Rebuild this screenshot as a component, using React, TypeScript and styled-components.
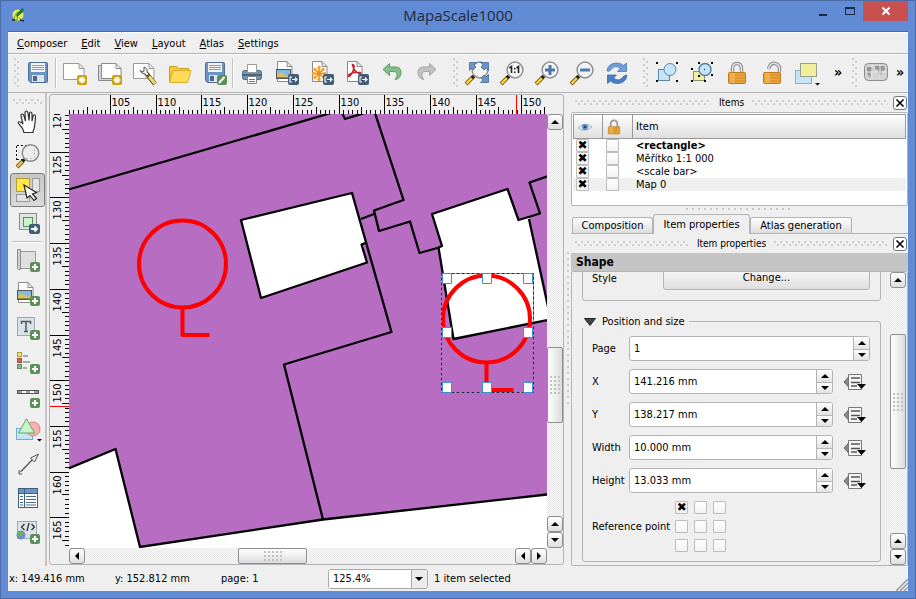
import React from 'react';
import styled, { createGlobalStyle, css } from 'styled-components';

const color = {
  frame: '#628bd5',
  frameEdge: '#4a6ba8',
  panel: '#efefef',
  line: '#b4b4b4',
  parcel: '#b66dc2',
  red: '#ff0000',
};

const GlobalStyle = createGlobalStyle`
  *, *::before, *::after { box-sizing: border-box; }
  body {
    margin: 0;
    background: ${color.frame};
    color: #000;
    font: 11px/13px 'DejaVu Sans Condensed', 'DejaVu Sans', sans-serif;
  }
  button, input, select { font: inherit; color: inherit; margin: 0; padding: 0; }
  svg { display: block; flex: none; overflow: visible; }
`;

const raised = css`
  border: 1px solid #8e8e8e;
  border-radius: 3px;
  background: linear-gradient(#ffffff, #dedede);
`;

const dots = css`
  background:
    conic-gradient(at 2px 2px, transparent 75%, #cdcdcd 0) 0 0 / 6px 6px,
    conic-gradient(at 2px 2px, transparent 75%, #cdcdcd 0) 3px 3px / 6px 6px;
`;

/* ---------- window ---------- */

const Window = styled.div`
  display: flex;
  flex-direction: column;
  min-height: 100vh;
  padding: 0 7px 7px;
  border: 1px solid ${color.frameEdge};
  background: ${color.frame};
`;

const TitleBar = styled.header`
  display: grid;
  grid-template-columns: 1fr auto 1fr;
  height: 30px;
  align-items: center;
`;

const Title = styled.h1`
  align-self: start;
  margin: 0;
  font: 400 15px/28px 'Open Sans', 'Noto Sans', sans-serif;
  color: #1e2a42;
`;

const WindowButtons = styled.div`
  display: flex;
  align-self: start;
  justify-content: flex-end;
`;

const WindowButton = styled.button<{ $close?: boolean }>`
  display: flex;
  align-items: center;
  justify-content: center;
  width: ${p => (p.$close ? 45 : 27)}px;
  height: 20px;
  border: 0;
  background: ${p => (p.$close ? '#c75050' : 'transparent')};
`;

const Client = styled.div`
  display: flex;
  flex-direction: column;
  flex: 1;
  border-top: 1px solid ${color.frameEdge};
  background: ${color.panel};
`;

const MenuBar = styled.nav`
  display: flex;
  height: 22px;
  padding: 0 2px;
  align-items: center;
  border-top: 1px solid #fff;
  border-bottom: 1px solid ${color.line};
`;

const MenuItem = styled.button`
  padding: 2px 7px;
  border: 0;
  background: none;
`;

/* ---------- tool bars ---------- */

const ToolBar = styled.div`
  display: flex;
  height: 39px;
  padding-bottom: 2px;
  align-items: center;
  border-top: 1px solid #fff;
  border-bottom: 1px solid ${color.line};
`;

const Grip = styled.span<{ $vertical?: boolean; $gap?: number }>`
  flex: none;
  ${dots}
  ${p => p.$vertical
    ? css`width: 6px; height: 30px; margin-left: ${p.$gap ?? 0}px;`
    : css`width: 30px; height: 6px; margin-top: 6px;`}
`;

const ToolButton = styled.button<{ $active?: boolean }>`
  position: relative;
  display: flex;
  flex: none;
  align-items: center;
  justify-content: center;
  width: 35px;
  height: 34px;
  border: 1px solid ${p => (p.$active ? '#7c7c7c' : 'transparent')};
  border-radius: 3px;
  background: ${p => (p.$active ? 'linear-gradient(#c6c6c6, #dadada)' : 'none')};
`;

const MoreButton = styled.button<{ $width: number }>`
  width: ${p => p.$width}px;
  height: 34px;
  border: 0;
  background: none;
  font-weight: 700;
  font-size: 14px;
  text-align: center;
`;

const ToolSeparator = styled.span<{ $horizontal?: boolean }>`
  flex: none;
  ${p => p.$horizontal
    ? css`width: 31px; height: 2px; border-top: 1px solid #c2c2c2; border-bottom: 1px solid #fff;`
    : css`width: 2px; height: 30px; border-left: 1px solid #c2c2c2; border-right: 1px solid #fff;`}
`;

const Body = styled.div`
  display: grid;
  grid-template-columns: 39px minmax(0, 517fr) 7px minmax(0, 337fr);
  flex: 1;
`;

const SideBar = styled.div`
  display: flex;
  flex-direction: column;
  align-items: center;
  padding-left: 2px;
  border-right: 2px solid #c4c4c4;
`;

/* ---------- canvas ---------- */

const CanvasFrame = styled.div`
  display: grid;
  grid-template-columns: 19px minmax(0, 1fr) 16px;
  grid-template-rows: 19px minmax(0, 1fr) 16px;
  margin: 1px 0 1px 2px;
  border: 1px solid ${color.line};
  border-radius: 3px;
`;

const Fill = styled.svg<{ $area: string }>`
  grid-area: ${p => p.$area};
  width: 100%;
  height: 100%;
  overflow: hidden;
`;

const ScrollBar = styled.div<{ $horizontal?: boolean; $area?: string }>`
  display: flex;
  flex-direction: ${p => (p.$horizontal ? 'row' : 'column')};
  ${p => p.$area && css`grid-area: ${p.$area};`}
  ${p => (p.$horizontal ? css`height: 16px;` : css`width: 16px;`)}
  background: repeating-conic-gradient(#e6e6e6 0 25%, #fafafa 0 50%) 0 0 / 2px 2px;
`;

const ScrollArrow = styled.button`
  display: flex;
  flex: none;
  align-items: center;
  justify-content: center;
  width: 16px;
  height: 16px;
  ${raised}
`;

const Track = styled.span<{ $size: number }>`
  flex: ${p => p.$size} 1 0;
`;

const Thumb = styled.button<{ $size: number; $horizontal?: boolean }>`
  display: flex;
  flex: ${p => p.$size} 1 0;
  align-items: center;
  justify-content: center;
  border: 1px solid #8e8e8e;
  border-radius: 2px;
  background: linear-gradient(${p => (p.$horizontal ? '180deg' : '90deg')}, #ffffff, #dcdcdc);

  &::after {
    content: '';
    width: ${p => (p.$horizontal ? 18 : 10)}px;
    height: ${p => (p.$horizontal ? 10 : 18)}px;
    background: conic-gradient(at 2px 2px, transparent 75%, #c2c2c2 0) 0 0 / 4px 4px;
  }
`;

const Splitter = styled.div<{ $row?: boolean }>`
  display: flex;
  flex: none;
  align-items: center;
  justify-content: center;
  ${p => p.$row && css`
    height: 8px;
    padding-bottom: 2px;
  `}

  &::after {
    content: '';
    width: ${p => (p.$row ? 108 : 2)}px;
    height: ${p => (p.$row ? 2 : 156)}px;
    background: conic-gradient(at 2px 2px, transparent 75%, #c9c9c9 0) 0 0 / 6px 6px;
  }
`;

/* ---------- docks ---------- */

const DockColumn = styled.aside`
  display: flex;
  flex-direction: column;
`;

const DockTitle = styled.div`
  display: flex;
  align-items: center;
  gap: 8px;
  height: 19px;
  padding: 0 1px 0 4px;
  font-size: 10px;
`;

const DockGrip = styled.span`
  flex: 1;
  height: 5px;
  ${dots}
`;

const CloseButton = styled.button`
  display: flex;
  align-items: center;
  justify-content: center;
  width: 14px;
  height: 14px;
  margin-left: -3px;
  border: 1px solid #777;
  border-radius: 3px;
  background: #fff;
`;

const TreeFrame = styled.div`
  height: 94px;
  border: 1px solid ${color.line};
  border-radius: 2px;
  background: #fff;
  padding: 1px;
`;

const Tree = styled.table`
  width: 100%;
  border-collapse: separate;
  border-spacing: 0;
  table-layout: fixed;
`;

const HeaderCell = styled.th<{ $width?: number }>`
  ${p => p.$width && css`width: ${p.$width}px;`}
  height: 25px;
  padding: 0 3px;
  border: 1px solid #9a9a9a;
  border-left-width: 0;
  background: linear-gradient(#fefefe, #dfdfdf);
  font-weight: 400;
  text-align: left;

  &:first-child { border-left-width: 1px; }
`;

const TreeRow = styled.tr<{ $shaded?: boolean; $bold?: boolean }>`
  background: ${p => (p.$shaded ? '#efefef' : '#fff')};
  font-weight: ${p => (p.$bold ? 700 : 400)};
`;

const TreeCell = styled.td`
  height: 13px;
  padding: 0 3px;
  line-height: 13px;
`;

const CheckBox = styled.input.attrs({ type: 'checkbox' })`
  display: flex;
  align-items: center;
  justify-content: center;
  appearance: none;
  width: 13px;
  height: 13px;
  border: 1px solid #bdbdbd;
  border-radius: 1px;
  background: linear-gradient(#ffffff, #f2f2f2);

  &:checked::after {
    content: '✖';
    font: 700 12px/11px 'DejaVu Sans', sans-serif;
  }
`;

const TabBar = styled.div`
  display: flex;
  align-items: flex-end;
  height: 20px;
  padding-left: 1px;
  border-bottom: 1px solid ${color.line};
`;

const Tab = styled.button<{ $active?: boolean; $grow: number }>`
  flex: 0 1 ${p => p.$grow}px;
  height: ${p => (p.$active ? 20 : 16)}px;
  margin-bottom: ${p => (p.$active ? -1 : 0)}px;
  border: 1px solid ${color.line};
  border-bottom: 0;
  border-radius: 3px 3px 0 0;
  background: ${p => (p.$active ? color.panel : 'linear-gradient(#ffffff, #dddddd)')};
  white-space: nowrap;
`;

const Heading = styled.h2`
  margin: 0;
  padding: 2px 5px 2px;
  background: #c5c5c5;
  font-size: 12px;
  line-height: 14px;
`;

const ScrollArea = styled.div`
  display: flex;
  flex: 1 1 0;
  overflow: hidden;
  padding-right: 1px;
  border: 1px solid ${color.line};
  border-radius: 2px;
`;

const Form = styled.div`
  flex: 1;
  padding: 0 9px 0 10px;
  margin-top: -26px;
`;

const StyleGroup = styled.div`
  display: flex;
  align-items: flex-end;
  height: 55px;
  margin-bottom: 14px;
  padding: 0 10px 10px 9px;
  border: 1px solid ${color.line};
  border-radius: 3px;
`;

const StyleLabel = styled.span`
  flex: 0 0 71px;
  line-height: 22px;
`;

const ChangeButton = styled.button`
  flex: 1;
  height: 26px;
  ${raised}
  border-color: ${color.line};
`;

const Group = styled.fieldset`
  min-width: 0;
  margin: 0;
  padding: 8px 10px 9px 9px;
  border: 1px solid ${color.line};
  border-radius: 3px;
`;

const Legend = styled.legend`
  display: flex;
  align-items: center;
  gap: 6px;
  margin-left: -10px;
  padding: 0 4px 0 2px;
  background: ${color.panel};
`;

const Toggle = styled.button`
  display: flex;
  border: 0;
  background: none;
`;

const Field = styled.div`
  display: grid;
  grid-template-columns: 37px minmax(0, 1fr) auto;
  align-items: center;
  height: 25px;
  margin-bottom: 8px;
`;

const SpinBox = styled.span`
  display: flex;
  height: 25px;
  border: 1px solid ${color.line};
  border-radius: 3px;
  background: #fff;
  overflow: hidden;
`;

const SpinInput = styled.input`
  flex: 1;
  min-width: 0;
  padding: 0 4px;
  border: 0;
  background: none;
`;

const SpinButtons = styled.span`
  display: grid;
  grid-template-rows: 1fr 1fr;
  width: 16px;
  border-left: 1px solid ${color.line};
`;

const SpinButton = styled.button`
  display: flex;
  align-items: center;
  justify-content: center;
  border: 0;
  background: linear-gradient(#ffffff, #e2e2e2);

  & + & { border-top: 1px solid ${color.line}; }
`;

const OverrideButton = styled.button`
  display: flex;
  justify-content: flex-end;
  width: 37px;
  padding-right: 3px;
  border: 0;
  background: none;
`;

const ReferenceField = styled.div`
  display: flex;
  align-items: center;
  gap: 5px;
`;

const ReferenceGrid = styled.div`
  display: grid;
  grid-template-columns: repeat(3, 13px);
  gap: 6px;
`;

/* ---------- status bar ---------- */

const StatusBar = styled.footer`
  display: flex;
  align-items: center;
  height: 25px;
  padding-left: 1px;
`;

const StatusText = styled.span<{ $width?: number }>`
  ${p => (p.$width ? css`flex: 0 0 ${p.$width}px;` : css`flex: 1; padding-left: 6px;`)}
`;

const ZoomBox = styled.label`
  position: relative;
  display: flex;
  width: 100px;
  height: 20px;
  border: 1px solid #a9a9a9;
  border-radius: 3px;
  overflow: hidden;
`;

const ZoomSelect = styled.select`
  flex: 1;
  appearance: none;
  padding: 0 4px;
  border: 0;
  background: linear-gradient(90deg, #fff calc(100% - 16px), #aaa 0, #aaa calc(100% - 15px), #ececec 0);
`;

const ZoomArrow = styled.span`
  position: absolute;
  right: 4px;
  top: 5px;
  pointer-events: none;
`;

const SizeGrip = styled.svg`
  align-self: flex-end;
  overflow: hidden;
`;

/* ---------- icons ---------- */

type Kids = { children: React.ReactNode };

const Icon = ({ children }: Kids) => (
  <svg width="24" height="24" viewBox="0 0 24 24" fill="none">{children}</svg>
);

const Arrow = ({ dir }: { dir: 'up' | 'down' | 'left' | 'right' }) => {
  const d = { up: 'M0 6 4 2 8 6Z', down: 'M0 2 4 6 8 2Z', left: 'M6 0 2 4 6 8Z', right: 'M2 0 6 4 2 8Z' }[dir];
  return <svg width="8" height="8" viewBox="0 0 8 8"><path d={d} fill="#000" /></svg>;
};

const Cross = ({ stroke, weight = 2 }: { stroke: string; weight?: number }) => (
  <svg width="8" height="8" viewBox="0 0 8 8"><path d="M.5.5 7.500 7.500M7.500.5.5 7.500" stroke={stroke} strokeWidth={weight} /></svg>
);

const Plus = ({ x = 14, y = 14 }: { x?: number; y?: number }) => (
  <g>
    <rect x={x} y={y} width="10" height="10" rx="2" fill="#5a9158" />
    <path d={`M${x + 5} ${y + 2}v6M${x + 2} ${y + 5}h6`} stroke="#fff" strokeWidth="2" />
  </g>
);

const Star = () => (
  <g>
    <rect x="14" y="14" width="10" height="10" rx="2" fill="#c9a107" />
    <path d="M19 15.500v7M15.500 19h7M16.500 16.500l5 5M21.500 16.500l-5 5" stroke="#fff" strokeWidth="1.300" />
  </g>
);

const Export = () => (
  <g>
    <rect x="13" y="13" width="11" height="11" rx="2" fill="#415c74" />
    <path d="M17 16h-2v5h2M17 18.500h5M20 16.500l2 2-2 2" stroke="#fff" strokeWidth="1.100" />
  </g>
);

const Page = () => <path d="M2.500 .5H12l5 5V20.500H2.500ZM12 .5v5h5" fill="#fff" stroke="#8a8a8a" />;

const Picture = () => (
  <g>
    <rect x="1.500" y="8.500" width="14" height="9" fill="#7cbbea" stroke="#555" />
    <path d="M2 14q4-5 7-1t6-1v5H2Z" fill="#d8c063" />
    <path d="M2 16h13v1H2Z" fill="#8c8a3d" />
  </g>
);

const Disk = () => (
  <g>
    <path d="M3.500 1.500h17q1 0 1 1v18q0 1-1 1h-16l-2-2v-17q0-1 1-1Z" fill="#6b94c4" stroke="#4d6f97" />
    <rect x="5" y="2" width="14" height="9" fill="#f4f4f4" />
    <path d="M6 4.500h12M6 6.500h12M6 8.500h12" stroke="#9a9a9a" />
    <rect x="6" y="14" width="12" height="7" fill="#e3e3e3" />
    <rect x="7" y="15" width="4" height="5" fill="#44688f" />
  </g>
);

const Lens = () => (
  <g>
    <path d="M1 23 8 16" stroke="#7a5a10" strokeWidth="4" />
    <path d="M1.500 22.500 7 17" stroke="#ffd23c" strokeWidth="2.400" />
    <path d="M7 17l2-2" stroke="#222" strokeWidth="3.500" />
    <circle cx="15" cy="9" r="7.900" fill="#f5f5f5" stroke="#909090" strokeWidth="1.500" />
  </g>
);

const Corners = () => (
  <path d="M1 1h2v2H1ZM21 1h2v2h-2ZM1 19h2v2H1ZM21 19h2v2h-2Z" fill="#000" />
);

const LockBody = () => (
  <g>
    <rect x="3.500" y="11.500" width="17" height="11" rx="1" fill="#e8a33b" stroke="#c17d1c" />
    <path d="M4 14h16M4 17h16M4 20h16" stroke="#d58f29" />
    <rect x="5" y="12" width="5" height="10" fill="#f3bd62" opacity=".6" />
  </g>
);

const icons = {
  save: <Icon><Disk /></Icon>,
  newPage: <Icon><path d="M.5 2.500H16l5 5v11H.5ZM16 2.500v5h5" fill="#fff" stroke="#9a9a9a" /><Star /></Icon>,
  duplicate: <Icon><path d="M.5 4.500v15h15v-2h-12v-13Z" fill="#d4d4d4" stroke="#8a8a8a" /><path d="M3.500 2.500H18l5 5v10H3.500ZM18 2.500v5h5" fill="#fff" stroke="#8a8a8a" /><Star /></Icon>,
  manage: <Icon><path d="M.5 2.500H16l5 5v10H.5ZM16 2.500v5h5" fill="#fff" stroke="#9a9a9a" /><path d="m13 12 9 11" stroke="#6d5717" strokeWidth="4.500" /><path d="m16 15.500 6 7" stroke="#f0d676" strokeWidth="3" /><path d="M7 9q1 4 5 4l2 2 2-2-2-2q1-4-3-5v4l-2 1Z" fill="#eee" stroke="#555" /></Icon>,
  folder: <Icon><path d="M1.500 20.500v-15h7l2 2h10v4" fill="#f6c83c" stroke="#cf9d1c" /><path d="M1.500 21.500 5 9.500h18l-3.500 12Z" fill="#ffdb57" stroke="#dcae2d" /></Icon>,
  saveAs: <Icon><Disk /><rect x="14" y="14" width="10" height="10" rx="2" fill="#5a9158" /><path d="m16 22 5.500-6" stroke="#fff" strokeWidth="2" /></Icon>,
  print: <Icon><rect x="2.500" y="9.500" width="19" height="9" rx="2" fill="#7193b0" stroke="#4c6c87" /><path d="M3 14h18" stroke="#49657e" strokeWidth="2" /><path d="M7.500 3.500h9v8h-9Z" fill="#fff" stroke="#999" /><path d="M7.500 15.500h9v7h-9Z" fill="#fff" stroke="#888" /><path d="M9 18.500h6M9 20.500h6" stroke="#777" /></Icon>,
  exportImage: <Icon><Page /><Picture /><Export /></Icon>,
  exportSvg: <Icon><Page /><path d="M9 6v13M2.500 12.500h13M4.500 8l9 9M13.500 8l-9 9" stroke="#f08c12" strokeWidth="1.600" /><g fill="#f7a22f"><circle cx="9" cy="6.500" r="1.700" /><circle cx="9" cy="18.500" r="1.700" /><circle cx="3.500" cy="12.500" r="1.700" /><circle cx="14.500" cy="12.500" r="1.700" /><circle cx="5" cy="8.500" r="1.700" /><circle cx="13" cy="8.500" r="1.700" /><circle cx="5" cy="16.500" r="1.700" /></g><Export /></Icon>,
  exportPdf: <Icon><Page /><path d="M7.500 3.500q2 0 1.500 3-1 6-5 9-2 0 0-2 5-3 11-2 2 1-1 1Q9 11 7.500 3.500Z" stroke="#c8262c" strokeWidth="1.600" /><Export /></Icon>,
  undo: <Icon><path d="M9.500 2.500 3 8.500l6.500 6v-4h4q4 0 3.500 4 0 2-2 4 6-1 6-7 0-5.500-6-5.500H9.500Z" fill="#86bf8c" stroke="#5a9a62" /></Icon>,
  redo: <Icon><path d="M14.500 2.500l6.500 6-6.500 6v-4h-4q-4 0-3.500 4 0 2 2 4-6-1-6-7 0-5.500 6-5.500h5.500Z" fill="#c2c2c2" stroke="#a3a3a3" /></Icon>,
  zoomFull: <Icon><Lens /><g fill="#6b94c4" stroke="#446b96" strokeWidth=".8"><path d="M4.500 1.500h7l-2.500 2.500 2 2-3 3-2-2L4.500 9.500Z" /><path d="M23.500 1.500v8L21 7l-2 2-3-3 2-2-2.500-2.500Z" /><path d="M23.500 21.500h-8L18 19l-2-2 3-3 2 2 2.500-2.500Z" /></g></Icon>,
  zoomActual: <Icon><Lens /><path d="m9.500 7 2-1.500V12M16.500 7l2-1.500V12" stroke="#222" strokeWidth="1.600" /><path d="M14 7h1.500v1.500H14ZM14 10.500h1.500V12H14Z" fill="#222" /></Icon>,
  zoomIn: <Icon><Lens /><path d="M15 4v10M10 9h10" stroke="#4a78ae" strokeWidth="3" /></Icon>,
  zoomOut: <Icon><Lens /><path d="M10 9h10" stroke="#4a78ae" strokeWidth="3" /></Icon>,
  refresh: <Icon><path d="M2 10q1-8 10-8 4 0 6.500 2.500L21.500 2v8.500h-9l3-3q-5-4-9 .5Q4.500 11 2 10Z" fill="#6fa0da" stroke="#3f6fae" strokeWidth=".7" /><path d="M22 14q-1 8.500-10 8.500-4 0-6.500-2.500L2.500 22.500V14h9l-3 3q5 4 9-.5 1.500-2.500 4.500-2.500Z" fill="#4a7fc4" stroke="#35629c" strokeWidth=".7" /></Icon>,
  group: <Icon><Corners /><rect x="3.500" y="8.500" width="11" height="11" fill="#c5e4f7" stroke="#5a87aa" /><circle cx="15" cy="8.500" r="6" fill="#c5e4f7" stroke="#5a87aa" /></Icon>,
  ungroup: <Icon><rect x="3.500" y="10.500" width="11" height="9" fill="#f2f0a0" stroke="#8f8f6a" /><circle cx="15" cy="8.500" r="6" fill="#c5e4f7" stroke="#4f7fa3" strokeWidth="1.400" /><path d="M8 1h2v2H8ZM21 1h2v2h-2ZM1 7h2v2H1ZM1 19h2v2H1ZM14 19h2v2h-2ZM21 13h2v2h-2ZM8 14h2v2H8ZM14 8h1v1h-1Z" fill="#000" /></Icon>,
  lock: <Icon><path d="M7.500 12V8q0-5.500 4.500-5.500T16.500 8v4" stroke="#8d8d8d" strokeWidth="3.500" /><path d="M7.500 12V8q0-5.500 4.500-5.500T16.500 8v4" stroke="#e2e2e2" strokeWidth="1.500" /><LockBody /></Icon>,
  unlock: <Icon><path d="M8.500 8Q10 1.500 15 2.500q5 1 4.500 6v3" stroke="#8d8d8d" strokeWidth="3.500" /><path d="M8.500 8Q10 1.500 15 2.500q5 1 4.500 6v3" stroke="#e2e2e2" strokeWidth="1.500" /><LockBody /></Icon>,
  raise: <Icon><rect x=".5" y="9.500" width="16" height="13" fill="#c5e4f7" stroke="#8cb0c8" /><rect x="5.500" y="2.500" width="16" height="13" fill="#f1ee9c" stroke="#9d9d8d" /><path d="M20 22h5l-2.500 2.500Z" fill="#000" /></Icon>,
  atlas: <Icon><rect x=".5" y="2.500" width="23" height="17" rx="4" fill="#d3d3d3" stroke="#8c8c8c" /><path d="M3 6h5l1 3-3 2 1 4-2 1-2-5ZM11 5h9l1 4-3 1-1 5-2-2-1-4-3-1Z" fill="#979797" /><path d="M8 3v16M16 3v16M1 11h22" stroke="#e6e6e6" /></Icon>,
  pan: <Icon><path d="M8 22.500Q7 18 3.500 14.500 1.500 12.500 2.500 12q2-1 4.500 2L5 6q0-2 1-2 1.500 0 2 2l1.500 5L9 3q0-2 1.300-2 1.200 0 1.700 2l1 7.500.5-6.500q0-2 1.300-2 1.200 0 1.200 2v7l1-4.500q.5-2 1.700-1.700 1 .4.800 2.200Q19 15 18 19q-1 2-1 3.500Z" fill="#fff" stroke="#333" strokeWidth="1.200" /></Icon>,
  zoom: <Icon><path d="M1 1.500h9M.5 2v14M1 15.500h8" stroke="#111" strokeDasharray="2 2" /><path d="m1 23 6-6" stroke="#7a5a10" strokeWidth="4" /><path d="m1.500 22.500 5-5" stroke="#e9c95c" strokeWidth="2.400" /><path d="m6.500 17.500 2.500-2.500" stroke="#222" strokeWidth="3" /><circle cx="14.500" cy="9" r="8.300" fill="#ececec" fillOpacity=".92" stroke="#8c8c8c" strokeWidth="1.500" /><path d="M18.500 5v9M10 14.500h8" stroke="#bbb" strokeDasharray="2 2" /></Icon>,
  select: <Icon><rect x=".5" y=".5" width="13" height="13" fill="#ffe64a" stroke="#b59e2d" /><rect x="16.500" y=".5" width="7" height="13" fill="#e3e3e3" stroke="#999" /><rect x=".5" y="16.500" width="13" height="7" fill="#e3e3e3" stroke="#999" /><path d="m8 7 3 13 3-2.500 4 5 2.500-2-4-4.500 4-1.500Z" fill="#fff" stroke="#222" strokeWidth="1.200" /></Icon>,
  moveContent: <Icon><rect x="3.500" y="1.500" width="17" height="16" fill="#e0e4e0" stroke="#8c8c8c" /><rect x="7.500" y="5.500" width="9" height="9" fill="#c8f5cb" stroke="#57915b" /><rect x="13" y="12" width="11" height="10" rx="2" fill="#3f5f78" /><path d="M15 17h6M18.500 14.500 21 17l-2.500 2.500" stroke="#fff" strokeWidth="1.800" /></Icon>,
  addMap: <Icon><path d="M4.500 3.500h15v17h-15Z" fill="#e0e0e0" stroke="#9a9a9a" /><path d="M1.500 1.500h3v20h-2q-1.500-1-1-3Z" fill="#d2d2d2" stroke="#8a8a8a" /><Plus /></Icon>,
  addImage: <Icon><Page /><Picture /><Plus /></Icon>,
  addLabel: <Icon><rect x="1.500" y="1.500" width="17" height="18" fill="#d9e2ea" stroke="#9aa9b6" /><path d="M5.500 8V5.500h9V8M10 5.500v10M8 15.500h4" stroke="#555" strokeWidth="1.500" /><Plus /></Icon>,
  addLegend: <Icon><rect x="1.500" y="2.500" width="4" height="4" fill="#f5e94f" stroke="#a89f3a" /><rect x="1.500" y="8.500" width="4" height="4" fill="#e2605c" stroke="#a94744" /><rect x="1.500" y="14.500" width="4" height="4" fill="#86bd87" stroke="#5b8c5d" /><path d="M7 6h5M7 12h7M7 18h4" stroke="#aaa" strokeWidth="2" /><Plus /></Icon>,
  addScale: <Icon><rect x="1.500" y="6.500" width="21" height="3" fill="#fff" stroke="#555" /><path d="M2 8h4M10 8h4M18 8h4" stroke="#999" strokeWidth="2" /><Plus /></Icon>,
  addShape: <Icon><rect x=".5" y="10.500" width="16" height="11" fill="#c5e4f7" stroke="#7ba9c8" /><circle cx="17" cy="11" r="7" fill="#f7b1b1" stroke="#df8080" /><path d="M10.500.8 18.500 15h-16Z" fill="#c5f5c9" stroke="#5fa766" /><path d="M21 21h5l-2.500 2.500Z" fill="#000" /></Icon>,
  addArrow: <Icon><path d="M3 21.500 17 7" stroke="#555" strokeWidth="1.300" /><path d="m22.500 2-8 4 4 4ZM3 18v4h3" fill="#eee" stroke="#555" /></Icon>,
  addTable: <Icon><rect x="2.500" y="2.500" width="19" height="19" fill="#fff" stroke="#3c5f80" /><path d="M3 3h18v4H3Z" fill="#6b94c4" /><path d="M3 7.500h18M8.500 3v18" stroke="#3c5f80" /><path d="M4 10.500h3M4 13.500h3M4 16.500h3M4 19h3M10 10.500h10M10 13.500h10M10 16.500h10M10 19h10" stroke="#4a6a86" /></Icon>,
  addHtml: <Icon><rect x="1.500" y="1.500" width="19" height="17" fill="#dbe3ea" stroke="#9aa9b6" /><path d="M8.500 4 5.500 7l3 3M15.500 4l3 3-3 3M13 3l-2 8" stroke="#333" strokeWidth="1.300" /><circle cx="5" cy="15" r="4.500" fill="#7a86d8" /><path d="M2 12q4-2 5 0t-2 4-3 1Z" fill="#62b25f" /><Plus /></Icon>,
};

type IconName = keyof typeof icons;

const Tool = ({ name, label, active }: { name: IconName; label: string; active?: boolean }) => (
  <ToolButton aria-label={label} title={label} $active={active}>{icons[name]}</ToolButton>
);

const Logo = () => (
  <svg width="20" height="18" viewBox="-2 0 20 18">
    <circle cx="8" cy="8" r="5.500" fill="#e6f05a" />
    <path d="M4 12Q5 7 8 5l1 1q-2 3-2 7ZM9 11l4 3" stroke="#9cb32a" fill="none" strokeWidth="1.500" />
    <path d="M6 8 11 2l3-1-1 4-6 5Z" fill="#1f7a2e" />
    <path d="M2 13h3M10 13l4 1" stroke="#20351f" strokeWidth="1.500" />
  </svg>
);

const Eye = () => (
  <svg width="16" height="10" viewBox="0 0 16 10">
    <path d="M1 6Q7-1 15 5 8 11 1 6Z" fill="#dfe8f1" stroke="#a9b4bf" />
    <circle cx="8" cy="5" r="3" fill="#5f8fc8" />
    <circle cx="8" cy="5" r="1.300" fill="#27405f" />
  </svg>
);

const SmallLock = () => (
  <svg width="16" height="16" viewBox="0 0 24 24" fill="none">
    <path d="M7 12V8q0-6 5-6t5 6v4" stroke="#9a9a9a" strokeWidth="2.500" />
    <LockBody />
  </svg>
);

const Override = () => (
  <svg width="24" height="18" viewBox="0 0 24 18">
    <path d="M1 9 6 3.500v11Z" fill="#888" stroke="#666" />
    <path d="M5.500 1.500h13v15h-13Z" fill="#f6f6f6" stroke="#777" />
    <path d="M8 5h9M8 9.500h9M8 13h6" stroke="#555" strokeWidth="1.500" />
    <path d="M14 11h9l-4.500 5Z" fill="#000" />
  </svg>
);

/* ---------- rulers and map ---------- */

const STEP = 45.7;
const indexes = Array.from({ length: 240 }, (_, i) => i - 10);
const tickLength = (i: number) => (i % 10 === 0 ? 19 : i % 5 === 0 ? 7 : 4);

const HorizontalRuler = () => (
  <Fill $area="1 / 2">
    {indexes.map(i => {
      const x = Math.round(41 + (i * STEP) / 10) + 0.5;
      return (
        <g key={i}>
          <path d={`M${x} 19v${-tickLength(i)}`} stroke="#000" />
          {i % 10 === 0 && i >= 0 && <text x={x + 1} y="11">{105 + i / 2}</text>}
        </g>
      );
    })}
    <path d="M447.500 0v19" stroke={color.red} />
  </Fill>
);

const VerticalRuler = () => (
  <Fill $area="2 / 1">
    {indexes.map(i => {
      const y = Math.round(-8 + (i * STEP) / 10) + 0.5;
      return (
        <g key={i}>
          <path d={`M19 ${y}h${-tickLength(i)}`} stroke="#000" />
          {i % 10 === 0 && i >= 0 && (
            <text transform={`translate(11 ${y + 3}) rotate(-90)`} textAnchor="end">{120 + i / 2}</text>
          )}
        </g>
      );
    })}
    <path d="M0 292.500h19" stroke={color.red} />
  </Fill>
);

const Sign = ({ x, y }: { x: number; y: number }) => (
  <g fill="none" stroke={color.red} strokeWidth="4">
    <circle cx={x} cy={y} r="43.500" />
    <path d={`M${x} ${y + 43}v28h27`} />
  </g>
);

const handles = [442, 482, 523].flatMap(x => [273, 327, 382].map(y => [x, y])).filter(([x, y]) => x !== 482 || y !== 327);

const MapView = () => (
  <Fill $area="2 / 2" role="img" aria-label="Map 0">
    <rect width="100%" height="100%" fill={color.parcel} />
    <g transform="translate(-69 -114)" strokeLinejoin="round">
      <path d="M60 472 115.500 449 140 547 323 519.500 547 494.500 1600 377V1600H60Z" fill="#fff" stroke="#000" strokeWidth="2.300" />
      <path d="M241 220 352 193 366.500 242.500 361.500 244.500 367 262.500 261 298Z" fill="#fff" />
      <path d="M432 214 507 189 518 219.500 529 217 548 308 560 318 453.500 339 438.500 247.500 442 246Z" fill="#fff" />
      <g fill="none" stroke="#000" strokeWidth="2.300">
        <path d="M60 192 331 113M341 111 345 119 366 112.500" />
        <path d="M374 110 403.500 200 374 210.500 379 231 410 221.500 419.500 253 439 247.500" />
        <path d="M361 219 374 214M366.500 242.500 361.500 244.500 367 262.500 261 298 241 220 352 193 391.500 332 284 364.500 323 519.500" />
        <path d="M560 317.500 453.500 339 438.500 247.500 442 246 432 214 507.500 189 518.500 220 540 213.500 529.500 182.500 560 172M529 219 552 325" />
      </g>
      <Sign x={182.500} y={264} />
      <Sign x={486.500} y={319} />
      <rect x="441.500" y="273.500" width="92" height="119" fill="none" stroke="#7fb2e0" />
      <rect x="441.500" y="273.500" width="92" height="119" fill="none" stroke="#5a1040" strokeDasharray="3 2" />
      {handles.map(([x, y]) => (
        <rect key={`${x}-${y}`} x={x + 0.5} y={y + 0.5} width="9" height="10" fill="#fff" stroke="#3b92cf" />
      ))}
    </g>
  </Fill>
);

type BarProps = { before: number; size: number; after: number; horizontal?: boolean; area?: string };

const Bar = ({ before, size, after, horizontal, area }: BarProps) => (
  <ScrollBar $horizontal={horizontal} $area={area}>
    <ScrollArrow aria-label="Scroll back"><Arrow dir={horizontal ? 'left' : 'up'} /></ScrollArrow>
    <Track $size={before} />
    <Thumb $size={size} $horizontal={horizontal} aria-label="Scroll thumb" />
    <Track $size={after} />
    <ScrollArrow aria-label="Scroll back"><Arrow dir={horizontal ? 'left' : 'up'} /></ScrollArrow>
    <ScrollArrow aria-label="Scroll forward"><Arrow dir={horizontal ? 'right' : 'down'} /></ScrollArrow>
  </ScrollBar>
);

/* ---------- panels ---------- */

const DockHeader = ({ title }: { title: string }) => (
  <DockTitle>
    <DockGrip />
    <span>{title}</span>
    <DockGrip />
    <CloseButton aria-label={`Close ${title}`}><Cross stroke="#000" weight={1.6} /></CloseButton>
  </DockTitle>
);

const items = ['<rectangle>', 'Měřítko 1:1 000', '<scale bar>', 'Map 0'];

const Spin = ({ id, label, value, override }: { id: string; label: string; value: string; override?: boolean }) => (
  <Field>
    <label htmlFor={id}>{label}</label>
    <SpinBox>
      <SpinInput id={id} defaultValue={value} />
      <SpinButtons>
        <SpinButton aria-label={`Increase ${label}`}><Arrow dir="up" /></SpinButton>
        <SpinButton aria-label={`Decrease ${label}`}><Arrow dir="down" /></SpinButton>
      </SpinButtons>
    </SpinBox>
    {override && <OverrideButton aria-label={`${label} data defined override`}><Override /></OverrideButton>}
  </Field>
);

const menus = ['Composer', 'Edit', 'View', 'Layout', 'Atlas', 'Settings'];
const anchors = ['top left', 'top', 'top right', 'left', 'centre', 'right', 'bottom left', 'bottom', 'bottom right'];

export default function App() {
  return (
    <>
      <GlobalStyle />
      <Window>
        <TitleBar>
          <Logo />
          <Title>MapaScale1000</Title>
          <WindowButtons>
            <WindowButton aria-label="Minimize"><svg width="8" height="12"><path d="M0 9h8v2H0Z" fill="#1d2a45" /></svg></WindowButton>
            <WindowButton aria-label="Maximize"><svg width="10" height="8"><path d="M0 0h10v8H0ZM1 2v5h8V2Z" fillRule="evenodd" fill="#1d2a45" /></svg></WindowButton>
            <WindowButton aria-label="Close" $close><Cross stroke="#fff" /></WindowButton>
          </WindowButtons>
        </TitleBar>
        <Client>
          <MenuBar>
            {menus.map(m => <MenuItem key={m}><u>{m[0]}</u>{m.slice(1)}</MenuItem>)}
          </MenuBar>
          <ToolBar>
            <Grip $vertical $gap={6} />
            <Tool name="save" label="Save project" />
            <ToolSeparator />
            <Tool name="newPage" label="New composer" />
            <Tool name="duplicate" label="Duplicate composer" />
            <Tool name="manage" label="Composer manager" />
            <Tool name="folder" label="Add from template" />
            <Tool name="saveAs" label="Save as template" />
            <ToolSeparator />
            <Tool name="print" label="Print" />
            <Tool name="exportImage" label="Export as image" />
            <Tool name="exportSvg" label="Export as SVG" />
            <Tool name="exportPdf" label="Export as PDF" />
            <Tool name="undo" label="Undo" />
            <Tool name="redo" label="Redo" />
            <Grip $vertical $gap={9} />
            <Tool name="zoomFull" label="Zoom full" />
            <Tool name="zoomActual" label="Zoom to 100%" />
            <Tool name="zoomIn" label="Zoom in" />
            <Tool name="zoomOut" label="Zoom out" />
            <Tool name="refresh" label="Refresh view" />
            <Grip $vertical $gap={9} />
            <Tool name="group" label="Group items" />
            <Tool name="ungroup" label="Ungroup items" />
            <Tool name="lock" label="Lock items" />
            <Tool name="unlock" label="Unlock items" />
            <Tool name="raise" label="Raise items" />
            <MoreButton $width={28} aria-label="More actions">»</MoreButton>
            <Grip $vertical />
            <Tool name="atlas" label="Preview atlas" />
            <MoreButton $width={14} aria-label="More atlas actions">»</MoreButton>
          </ToolBar>
          <Body>
            <SideBar>
              <Grip />
              <Tool name="pan" label="Pan" />
              <Tool name="zoom" label="Zoom" />
              <Tool name="select" label="Select item" active />
              <Tool name="moveContent" label="Move item content" />
              <ToolSeparator $horizontal />
              <Tool name="addMap" label="Add map" />
              <Tool name="addImage" label="Add image" />
              <Tool name="addLabel" label="Add label" />
              <Tool name="addLegend" label="Add legend" />
              <Tool name="addScale" label="Add scale bar" />
              <Tool name="addShape" label="Add shape" />
              <Tool name="addArrow" label="Add arrow" />
              <Tool name="addTable" label="Add attribute table" />
              <Tool name="addHtml" label="Add HTML frame" />
            </SideBar>
            <CanvasFrame>
              <HorizontalRuler />
              <VerticalRuler />
              <MapView />
              <Bar area="2 / 3" before={218} size={75} after={93} />
              <Bar area="3 / 2" before={154} size={68} after={209} horizontal />
            </CanvasFrame>
            <Splitter />
            <DockColumn>
              <DockHeader title="Items" />
              <TreeFrame>
                <Tree>
                  <thead>
                    <tr>
                      <HeaderCell $width={30} aria-label="Visible"><Eye /></HeaderCell>
                      <HeaderCell $width={30} aria-label="Locked"><SmallLock /></HeaderCell>
                      <HeaderCell>Item</HeaderCell>
                    </tr>
                  </thead>
                  <tbody>
                    {items.map((name, i) => (
                      <TreeRow key={name} $bold={i === 0} $shaded={i === 3}>
                        <TreeCell><CheckBox defaultChecked aria-label={`${name} visible`} /></TreeCell>
                        <TreeCell><CheckBox aria-label={`${name} locked`} /></TreeCell>
                        <TreeCell>{name}</TreeCell>
                      </TreeRow>
                    ))}
                  </tbody>
                </Tree>
              </TreeFrame>
              <Splitter $row />
              <TabBar role="tablist">
                <Tab role="tab" $grow={81}>Composition</Tab>
                <Tab role="tab" $grow={97} $active aria-selected>Item properties</Tab>
                <Tab role="tab" $grow={102}>Atlas generation</Tab>
              </TabBar>
              <DockHeader title="Item properties" />
              <Heading>Shape</Heading>
              <ScrollArea>
                <Form>
                  <StyleGroup>
                    <StyleLabel>Style</StyleLabel>
                    <ChangeButton>Change...</ChangeButton>
                  </StyleGroup>
                  <Group>
                    <Legend>
                      <Toggle aria-label="Collapse Position and size">
                        <svg width="12" height="8" viewBox="0 0 12 8"><path d="M.5.5h11L6 7.500Z" fill="#444" stroke="#222" /></svg>
                      </Toggle>
                      Position and size
                    </Legend>
                    <Spin id="page" label="Page" value="1" />
                    <Spin id="x" label="X" value="141.216 mm" override />
                    <Spin id="y" label="Y" value="138.217 mm" override />
                    <Spin id="width" label="Width" value="10.000 mm" override />
                    <Spin id="height" label="Height" value="13.033 mm" override />
                    <ReferenceField role="group" aria-labelledby="reference">
                      <span id="reference">Reference point</span>
                      <ReferenceGrid>
                        {anchors.map((a, i) => <CheckBox key={a} aria-label={a} defaultChecked={i === 0} />)}
                      </ReferenceGrid>
                    </ReferenceField>
                  </Group>
                </Form>
                <Bar before={46} size={133} after={64} />
              </ScrollArea>
            </DockColumn>
          </Body>
          <StatusBar>
            <StatusText $width={106}>x: 149.416 mm</StatusText>
            <StatusText $width={106}>y: 152.812 mm</StatusText>
            <StatusText $width={107}>page: 1</StatusText>
            <ZoomBox>
              <ZoomSelect aria-label="Zoom level" defaultValue="125.4%">
                <option>125.4%</option>
              </ZoomSelect>
              <ZoomArrow><Arrow dir="down" /></ZoomArrow>
            </ZoomBox>
            <StatusText>1 item selected</StatusText>
            <SizeGrip width="12" height="12" viewBox="0 0 12 12"><path d="M0 12 12 0M4 12l8-8M8 12l4-4" stroke="#999" strokeWidth="1.500" /></SizeGrip>
          </StatusBar>
        </Client>
      </Window>
    </>
  );
}
